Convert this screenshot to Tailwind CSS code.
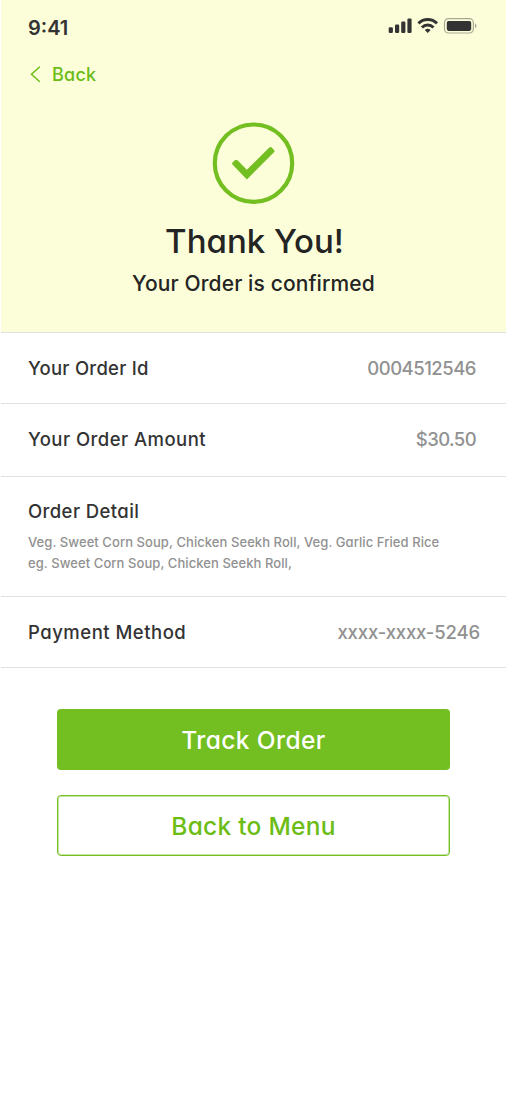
<!DOCTYPE html>
<html lang="en">
<head>
<meta charset="utf-8">
<title>Order confirmed</title>
<script src="https://cdn.jsdelivr.net/npm/@tailwindcss/browser@4"></script>
</head>
<body class="bg-white">
<main class="flex h-[1095px] w-[506px] flex-col overflow-hidden bg-white pl-px font-['Inter','Open_Sans',sans-serif] font-medium text-[#333333] [font-feature-settings:'cv11']">
  <header class="flex h-[332px] shrink-0 flex-col bg-[#fcfed9]">
    <div class="flex h-14 items-center justify-between pr-[29px] pl-[27px]">
      <span class="text-[20px] leading-6 font-semibold">9:41</span>
      <svg class="mb-1 h-4 w-[89px]" viewBox="0 0 89 16" fill="#333333">
        <rect x="0.7" y="9.3" width="4.2" height="5.7" rx="1.2"/>
        <rect x="7" y="6.6" width="4.2" height="8.4" rx="1.2"/>
        <rect x="13.2" y="3.6" width="4.2" height="11.4" rx="1.2"/>
        <rect x="19.4" y="0.6" width="4.2" height="14.4" rx="1.2"/>
        <g fill="none" stroke="#333333" stroke-width="2.9">
          <path d="M30.4 5.4a13.2 13.2 0 0 1 18.6 0"/>
          <path d="M33.9 9.4a8.2 8.2 0 0 1 11.6 0"/>
        </g>
        <path d="M36.8 12.1a4.3 4.3 0 0 1 5.8 0l-2.9 3z"/>
        <rect x="56.5" y="0.7" width="28.9" height="14.3" rx="4" fill="none" stroke="#a8a994" stroke-width="1.2"/>
        <rect x="58.8" y="2.9" width="24.4" height="10" rx="1.8"/>
        <path d="M87 5.6c2 .7 2 3.9 0 4.6z" fill="#a8a994"/>
      </svg>
    </div>
    <a class="flex h-9 items-center gap-[11px] pl-[29px] text-[18px] tracking-[0.25px] text-[#6cbc16]">
      <svg class="h-[18px] w-[11px]" viewBox="0 0 11 18" fill="none" stroke="#6cbc16" stroke-width="1.5"><path d="M9.8 1.7 1.5 9.2l8.3 7.6"/></svg>
      <span class="pt-px">Back</span>
    </a>
    <svg class="mt-[30px] h-[83px] w-[83px] self-center" viewBox="0 0 83 83">
      <circle cx="41.5" cy="41.2" r="38.7" fill="none" stroke="#73be20" stroke-width="4.2"/>
      <path d="M20.7 40.3 23 38.2Q24.3 37.1 25.5 38.3L34.8 47.8 57.3 25.6Q58.5 24.5 59.7 25.6L62 27.9Q63.2 29.1 62 30.3L34.9 57.5 20.7 42.7Q19.6 41.5 20.7 40.3Z" fill="#73be20"/>
    </svg>
    <h1 class="mt-4 pl-0.5 text-center text-[33px] leading-10 text-[#242424]">Thank You!</h1>
    <p class="mt-[7px] text-center text-[21px] leading-8 tracking-[0.12px] text-[#242424]">Your Order is confirmed</p>
  </header>
  <dl class="text-[18.5px] leading-6">
    <div class="flex h-[72px] items-center justify-between border-y border-[#e0e0e0] pr-[30px] pl-[27px]">
      <dt class="tracking-[0.25px]">Your Order Id</dt>
      <dd class="tracking-[-0.5px] text-[#919191]">0004512546</dd>
    </div>
    <div class="flex h-[73px] items-center justify-between border-b border-[#e0e0e0] pr-[30px] pb-0.5 pl-[27px]">
      <dt class="tracking-[0.45px]">Your Order Amount</dt>
      <dd class="tracking-[-0.6px] text-[#919191]">$30.50</dd>
    </div>
    <div class="h-[120px] border-b border-[#e0e0e0] pt-[22px] pl-[27px]">
      <dt class="tracking-[0.4px]">Order Detail</dt>
      <dd class="mt-[9px] text-[13px] leading-[21px] tracking-[0.07px] text-[#919191]">Veg. Sweet Corn Soup, Chicken Seekh Roll, Veg. Garlic Fried Rice<br>eg. Sweet Corn Soup, Chicken Seekh Roll,</dd>
    </div>
    <div class="flex h-[71px] items-center justify-between border-b border-[#e0e0e0] pr-[26px] pl-[27px]">
      <dt class="tracking-[0.5px]">Payment Method</dt>
      <dd class="tracking-[-0.15px] text-[#919191]">xxxx-xxxx-5246</dd>
    </div>
  </dl>
  <div class="mt-[41px] flex flex-col gap-[25px] pr-14 pl-14 text-[24.5px]">
    <button class="h-[61px] rounded-[4px] bg-[#73be20] pt-0.5 tracking-[0.4px] text-white">Track Order</button>
    <button class="h-[61px] rounded-[4px] border border-[#73be20] bg-white pt-0.5 tracking-[0.25px] text-[#6cbc16] inset-ring inset-ring-[#73be20]/40">Back to Menu</button>
  </div>
</main>
</body>
</html>
